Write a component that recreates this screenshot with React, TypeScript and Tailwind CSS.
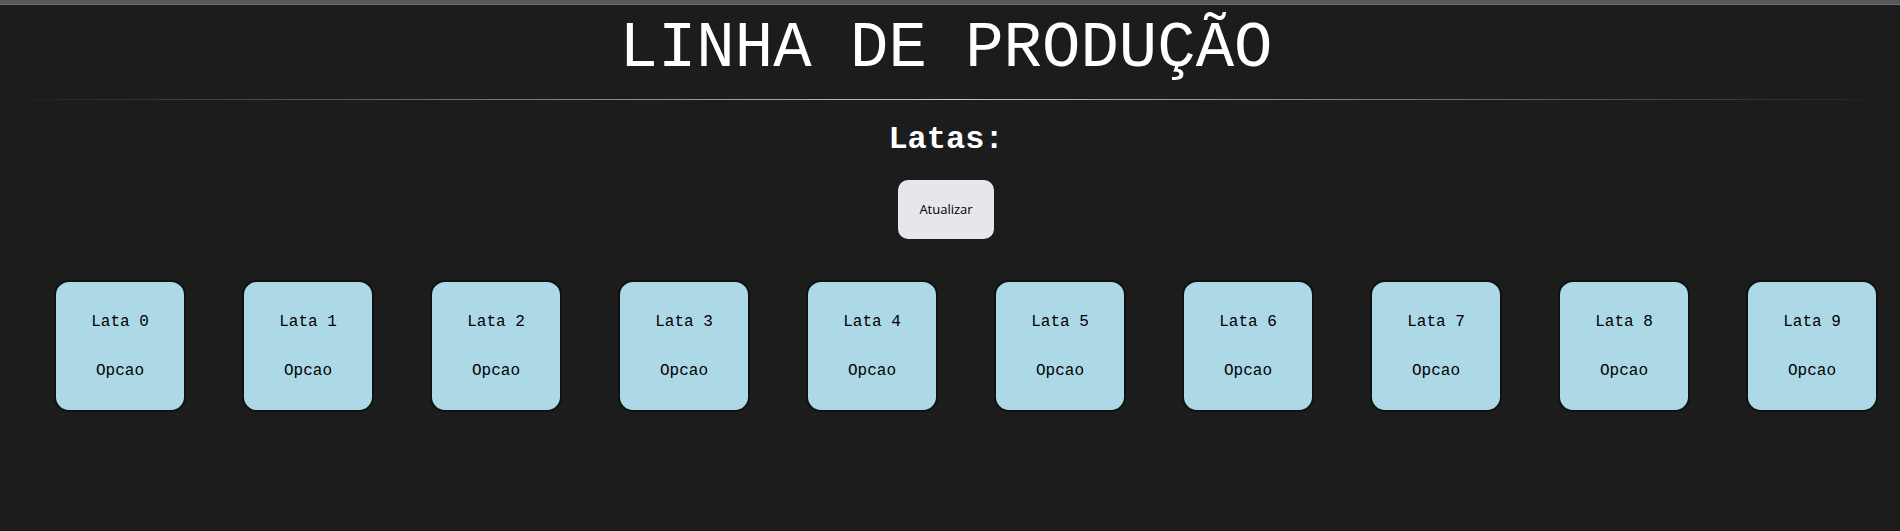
const latas = [0, 1, 2, 3, 4, 5, 6, 7, 8, 9];

function Lata({ n }: { n: number }) {
  return (
    <div className="w-[132px] h-[132px] shrink-0 bg-[#add8e6] border-2 border-[#111] rounded-[15px] flex flex-col items-center justify-center gap-[31px] text-black text-[16px] leading-[18px]">
      <p>Lata {n}</p>
      <p>Opcao</p>
    </div>
  );
}

export default function App() {
  return (
    <div className="min-h-[531px] bg-[#1c1c1c] font-['Liberation_Mono',monospace] text-white">
      <div className="h-[4px] bg-[#54575c]" />
      <div className="h-[1px] bg-[#6a6d72]" />
      <header className="h-[94px] flex justify-center pt-[7px] pr-[8px]">
        <h1 className="text-[64px] leading-[74px]">LINHA DE PRODUÇÃO</h1>
      </header>
      <div className="h-[1px] bg-[linear-gradient(to_right,transparent,#c4c4c4,transparent)]" />
      <main className="flex flex-col items-center pr-[8px]">
        <h2 className="mt-[22px] text-[32px] leading-[36px] font-bold">Latas:</h2>
        <button className="mt-[22px] w-[96px] h-[59px] bg-[#e8e6eb] rounded-[10px] text-black text-[13px] font-['Open_Sans',sans-serif]">
          Atualizar
        </button>
      </main>
      <section className="flex gap-[56px] pl-[54px] mt-[41px]">
        {latas.map((n) => (
          <Lata key={n} n={n} />
        ))}
      </section>
    </div>
  );
}
